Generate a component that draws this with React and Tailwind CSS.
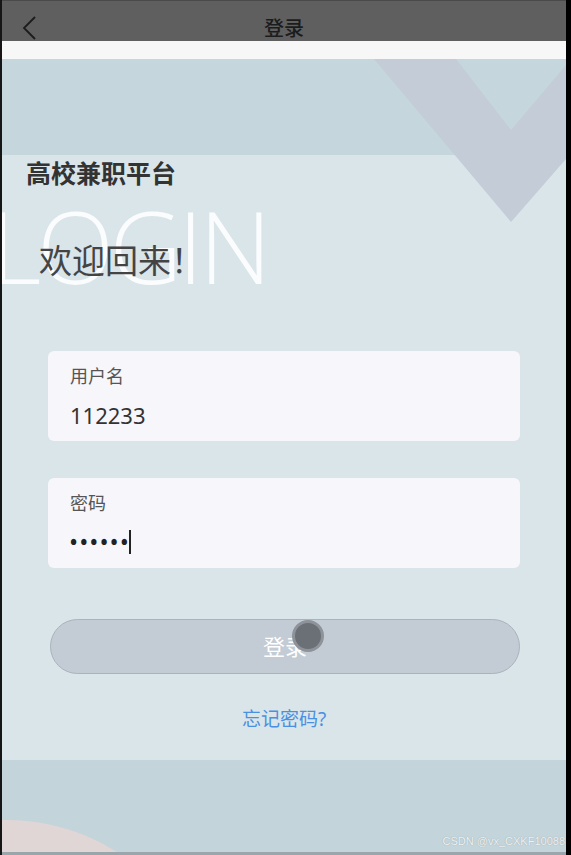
import React from 'react';

const font = { fontFamily: '"Noto Sans", "Noto Sans CJK SC", sans-serif' };

const Field = ({ label, children }) => (
  <div className="ml-[46px] w-[472px] h-[90px] rounded-md bg-[#f7f6fb] pl-[22px] pt-[13px]">
    <div className="text-[18px] leading-[24px] text-[#555]">{label}</div>
    <div className="mt-[12px] h-[30px] flex items-center text-[22px] text-[#333]">{children}</div>
  </div>
);

const App = () => {
  return (
    <div className="w-[571px] h-[855px] flex bg-black overflow-hidden" style={font}>
      <div className="w-[2px] bg-[#161616]" />
      <div className="w-[564px] flex flex-col">
        {/* nav bar */}
        <div className="h-[41px] bg-[#5f5f5f] border-t border-[#4a4a4a] relative flex items-center justify-center">
          <svg className="absolute left-[18px] top-[14px]" width="20" height="26" viewBox="0 0 20 26" fill="none">
            <path d="M15 2 L4 13 L15 24" stroke="#1c1c1c" strokeWidth="1.8" />
          </svg>
          <span className="mt-[16px] text-[20px] leading-[24px] font-medium text-[#1c1c1c]">登录</span>
        </div>
        <div className="h-[18px] bg-[#f7f7f7]" />

        {/* page */}
        <div className="relative h-[793px] overflow-hidden bg-[#dae5e9]">
          <svg className="absolute left-0 top-0" width="564" height="260" viewBox="0 0 564 260">
            <rect x="0" y="0" width="564" height="96" fill="#c5d6dc" />
            <polygon points="372,0 454,0 509,71 564,6 564,100 509,163" fill="#c3ccd7" />
          </svg>
          <div className="absolute left-0 bottom-0 w-full h-[92px] bg-[#c3d4da]" />
          <div className="absolute left-[-200px] top-[761px] w-[410px] h-[410px] rounded-full bg-[#e0d6d6]" />
          <div
            className="absolute left-[-12px] top-[136px] text-[100px] leading-[100px] font-light text-white/90 tracking-[-4px]"
            style={{ fontFamily: '"Open Sans", sans-serif' }}
          >
            LOGIN
          </div>

          <div className="relative pt-[100px]">
            <div className="pl-[24px] text-[25px] leading-[28px] font-bold text-[#333]">高校兼职平台</div>
            <div className="mt-[54px] pl-[37px] text-[33px] leading-[40px] text-[#444]">欢迎回来！</div>

            <div className="mt-[70px]">
              <Field label="用户名">112233</Field>
            </div>
            <div className="mt-[37px]">
              <Field label="密码">
                <span className="tracking-[3px] text-[19px] font-bold text-[#222]">••••••</span>
                <span className="ml-[-2px] w-[2px] h-[24px] bg-[#222]" />
              </Field>
            </div>

            <div className="mt-[51px] ml-[48px] w-[470px] h-[55px] rounded-full bg-[#c3cbd5] border border-[#aab3bd] relative flex items-center justify-center">
              <span className="text-[22px] text-white">登录</span>
              <div className="absolute left-[241px] top-[0px] w-[32px] h-[32px] rounded-full bg-[#6b6f76] border-[3px] border-[#8e939a]" />
            </div>

            <div className="mt-[32px] text-center text-[19px] leading-[26px] text-[#4a90e2]">忘记密码?</div>
          </div>

          <div className="absolute right-[1px] bottom-[4px] text-[11px] leading-[14px] text-[#eef2f4]" style={{ fontFamily: '"Liberation Sans", sans-serif', textShadow: '0 0 1px #8a9aa0' }}>
            CSDN @vx_CXKF10088
          </div>
        </div>
        <div className="h-[3px] bg-[#9aa6ab]" />
      </div>
      <div className="w-[5px] bg-black" />
    </div>
  );
};

export default App;
